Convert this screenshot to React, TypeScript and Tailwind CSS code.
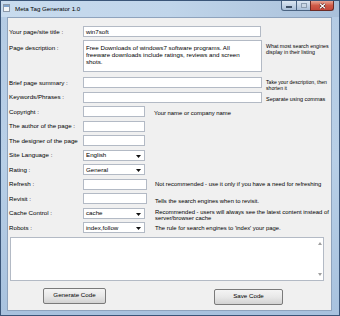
import React from 'react';

const Arrow = () => (
  <svg width="5" height="3" viewBox="0 0 5 3" className="absolute right-[3px] top-[4px]">
    <path d="M0 0H5L2.5 3Z" fill="#111" />
  </svg>
);

const Field = ({ w, h = 'h-[11px]', value }: { w: string; h?: string; value?: string }) => (
  <div className={`${w} ${h} shrink-0 bg-white border border-[#b3bac5] px-[2px] flex items-center text-black overflow-hidden`}>
    {value}
  </div>
);

const Select = ({ value }: { value: string }) => (
  <div className="relative w-[62px] h-[11px] shrink-0 bg-white border border-[#b3bac5] px-[2px] flex items-center text-black">
    {value}
    <Arrow />
  </div>
);

const Row = ({ label, children }: { label: string; children: React.ReactNode }) => (
  <div className="flex h-[14.5px] items-start">
    <div className="w-[75px] pl-[1px] h-[11px] flex items-center shrink-0 whitespace-nowrap">{label}</div>
    {children}
  </div>
);

const Hint = ({
  ml,
  children,
  pt = 'pt-[2px]',
  size = 'text-[5.9px]',
}: {
  ml: string;
  children: React.ReactNode;
  pt?: string;
  size?: string;
}) => <div className={`${ml} ${pt} ${size} leading-[6.6px] text-black whitespace-nowrap`}>{children}</div>;

export default function App() {
  return (
    <div className="w-[340px] h-[316px] flex flex-col border border-[#3a5578] bg-gradient-to-b from-[#b4cbe4] via-[#b8cfe7] to-[#a8c2de] overflow-hidden font-['Liberation_Sans',Arial,sans-serif] text-[6.2px] text-black">
      {/* title bar */}
      <div className="h-[16px] flex items-start bg-gradient-to-r from-[#c8dbee] via-[#c0d5ea] to-[#a9c0da]">
        <div className="ml-[2px] mt-[3px] w-[7px] h-[8px] bg-[#f4f6f8] border border-[#8b98a8] flex flex-col">
          <div className="h-[2px] bg-[#7fa3cc]" />
        </div>
        <div className="ml-[5px] mt-[4px] text-black leading-[7px]">Meta Tag Generator 1.0</div>
        <div className="ml-auto mr-[5px] flex h-[10px]">
          <div className="w-[16px] h-full border border-[#4a6382] border-t-0 rounded-bl-[3px] bg-gradient-to-b from-[#dbe6f2] to-[#a9bfd8] flex items-center justify-center">
            <div className="w-[6px] h-[2px] bg-white border border-[#3d4f66] mt-[2px]" />
          </div>
          <div className="w-[13px] h-full border-b border-[#4a6382] bg-gradient-to-b from-[#dbe6f2] to-[#a9bfd8] flex items-center justify-center">
            <div className="w-[6px] h-[5px] border border-[#8d9db0] bg-[#c9d6e4]" />
          </div>
          <div className="w-[24px] h-full border border-[#6b2a24] border-t-0 rounded-br-[3px] bg-gradient-to-b from-[#e7a595] via-[#cf5a47] to-[#c4473a] flex items-center justify-center">
            <svg width="7" height="6" viewBox="0 0 7 6">
              <path d="M1 0.8L6 5.2M6 0.8L1 5.2" stroke="#3d1510" strokeWidth="2.2" />
              <path d="M1 0.8L6 5.2M6 0.8L1 5.2" stroke="#fff" strokeWidth="1.3" />
            </svg>
          </div>
        </div>
      </div>

      {/* client area */}
      <div className="flex-1 ml-[6px] mr-[7px] mb-[4px] bg-[#f0f0f0] border border-[#8ea3bd] flex flex-col overflow-hidden">
        <div className="flex items-center h-[11px] mt-[8px]">
          <div className="w-[75px] pl-[1px] shrink-0">Your page/site title :</div>
          <Field w="w-[178px]" value="win7soft" />
        </div>

        <div className="flex items-start mt-[3px]">
          <div className="w-[75px] pl-[1px] pt-[3px] shrink-0">Page description :</div>
          <div className="w-[179px] h-[32px] shrink-0 bg-white border border-[#b3bac5] px-[2px] pt-[3px] leading-[7px]">
            Free Downloads of windows7 software programs. All
            <br />
            freeware downloads include ratings, reviews and screen
            <br />
            shots.
          </div>
          <Hint ml="ml-[4px]" pt="pt-[2.5px]" size="text-[5.3px]">
            What most search engines
            <br />
            display in their listing
          </Hint>
        </div>

        <div className="mt-[5px] flex flex-col">
          <Row label="Brief page summary :">
            <Field w="w-[179px]" />
            <Hint ml="ml-[4px]" pt="pt-[1.5px]" size="text-[5.1px]">
              Take your description, then
              <br />
              shorten it
            </Hint>
          </Row>
          <Row label="Keywords/Phrases :">
            <Field w="w-[179px]" />
            <Hint ml="ml-[4px]" pt="pt-[4px]" size="text-[5.5px]">Separate using commas</Hint>
          </Row>
          <Row label="Copyright :">
            <Field w="w-[62px]" />
            <Hint ml="ml-[9px]" pt="pt-[4px]">Your name or company name</Hint>
          </Row>
          <Row label="The author of the page :">
            <Field w="w-[62px]" />
          </Row>
          <Row label="The designer of the page">
            <Field w="w-[62px]" />
          </Row>
          <Row label="Site Language :">
            <Select value="English" />
          </Row>
          <Row label="Rating :">
            <Select value="General" />
          </Row>
          <Row label="Refresh :">
            <Field w="w-[64px]" />
            <Hint ml="ml-[8px]" pt="pt-[2px]">Not recommended - use it only if you have a need for refreshing</Hint>
          </Row>
          <Row label="Revisit :">
            <Field w="w-[64px]" />
            <Hint ml="ml-[8px]" pt="pt-[5px]">Tells the search engines when to revisit.</Hint>
          </Row>
          <Row label="Cache Control :">
            <Select value="cache" />
            <Hint ml="ml-[10px]" pt="pt-[1px]">
              Recommended - users will always see the latest content instead of
              <br />
              server/browser cache
            </Hint>
          </Row>
          <Row label="Robots :">
            <Select value="index,follow" />
            <Hint ml="ml-[10px]" pt="pt-[3px]">The rule for search engines to 'index' your page.</Hint>
          </Row>
        </div>

        <div className="ml-[2px] w-[314px] h-[44px] bg-white border border-[#b3bac5] flex justify-end">
          <div className="w-[7px] flex flex-col items-center justify-between py-[4px]">
            <svg width="4" height="3" viewBox="0 0 4 3"><path d="M0 3H4L2 0Z" fill="#a0a0a0" /></svg>
            <svg width="4" height="3" viewBox="0 0 4 3"><path d="M0 0H4L2 3Z" fill="#a0a0a0" /></svg>
          </div>
        </div>

        <div className="flex items-start mt-[7px]">
          <button className="ml-[35px] w-[63px] h-[16px] rounded-[2px] border border-[#7a7a7a] bg-gradient-to-b from-[#f4f4f4] via-[#e8e8e8] to-[#d2d2d2] text-black text-[6.2px] leading-none font-['Liberation_Sans',Arial,sans-serif]">
            Generate Code
          </button>
          <button className="ml-[108px] mt-[1px] w-[69px] h-[16px] rounded-[2px] border border-[#7a7a7a] bg-gradient-to-b from-[#f4f4f4] via-[#e8e8e8] to-[#d2d2d2] text-black text-[6.2px] leading-none font-['Liberation_Sans',Arial,sans-serif]">
            Save Code
          </button>
        </div>
      </div>
    </div>
  );
}
